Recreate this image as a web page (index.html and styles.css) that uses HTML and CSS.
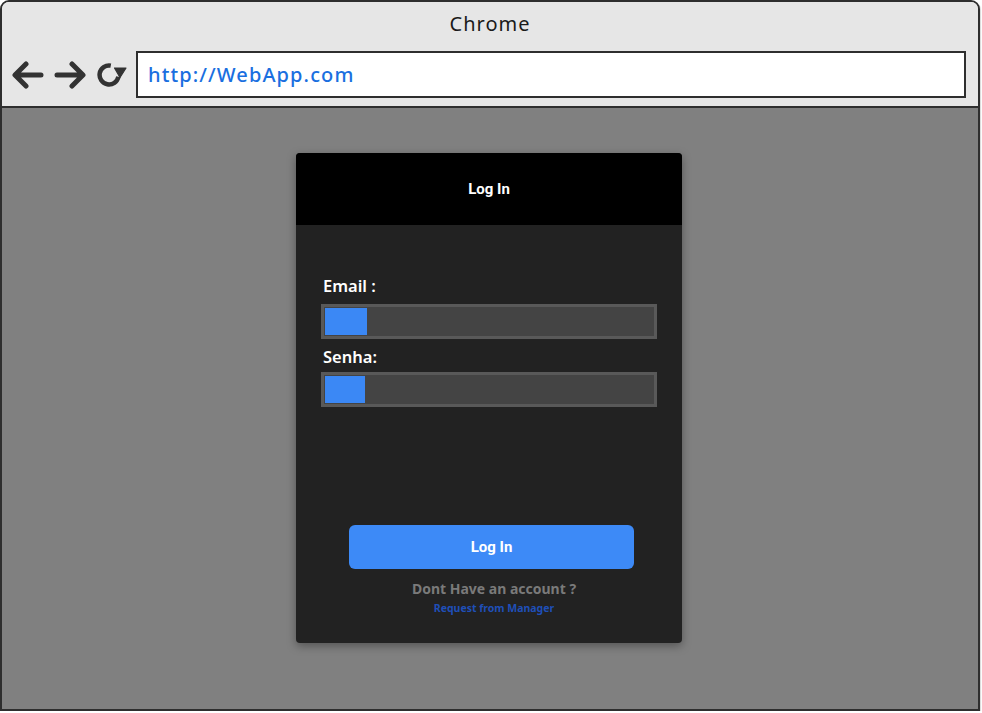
FILE: index.html
```html
<!DOCTYPE html>
<html>
<head>
<meta charset="utf-8">
<link rel="stylesheet" href="styles.css">
</head>
<body>
<div class="window">
  <div class="chrome">
    <div class="title">Chrome</div>
    <div class="toolbar">
      <svg class="icon" width="32" height="28" viewBox="0 0 32 28"><path d="M29 14H4M14 3L3 14L14 25" fill="none" stroke="#333" stroke-width="5" stroke-linecap="round" stroke-linejoin="round"/></svg>
      <svg class="icon" width="32" height="28" viewBox="0 0 32 28"><path d="M3 14H28M18 3L29 14L18 25" fill="none" stroke="#333" stroke-width="5" stroke-linecap="round" stroke-linejoin="round"/></svg>
      <svg class="icon icon-reload" width="32" height="28" viewBox="0 0 32 28"><path d="M13.8 4.6A9.5 9.5 0 1 0 21.4 15.8" fill="none" stroke="#333" stroke-width="4.5" stroke-linecap="butt"/><path d="M17.5 7L29 7L23 16.5Z" fill="#333" stroke="#333" stroke-width="1.2" stroke-linejoin="round"/></svg>
      <div class="url">http://WebApp.com</div>
    </div>
  </div>
  <div class="content">
    <div class="card">
      <div class="card-head">Log In</div>
      <div class="card-body">
        <label class="label">Email :</label>
        <div class="input"><span class="cursor"></span></div>
        <label class="label label-2">Senha:</label>
        <div class="input"><span class="cursor cursor-2"></span></div>
        <div class="spacer"></div>
        <button class="btn">Log In</button>
        <div class="no-account">Dont Have an account ?</div>
        <div class="request">Request from Manager</div>
      </div>
    </div>
  </div>
</div>
</body>
</html>
```

FILE: styles.css
```css
* { box-sizing: border-box; }
html, body { margin: 0; padding: 0; background: #fff; }
body { font-family: "Noto Sans", "Open Sans", sans-serif; }

.window {
  width: 980px;
  height: 711px;
  border: 2px solid #2e2e2e;
  border-radius: 9px 9px 0 0;
  display: flex;
  flex-direction: column;
  overflow: hidden;
  box-shadow: 1px 1px 1px rgba(0,0,0,0.15);
}

.chrome {
  background: #e6e6e6;
  border-bottom: 2px solid #2e2e2e;
  height: 106px;
  display: flex;
  flex-direction: column;
}

.title {
  height: 46px;
  line-height: 44px;
  text-align: center;
  font-size: 20px;
  letter-spacing: 1px;
  color: #1a1a1a;
}

.toolbar {
  display: flex;
  align-items: center;
  padding-left: 10px;
  height: 49px;
  margin-top: 2px;
}

.icon { display: block; margin-right: 10px; }
.icon-reload { margin-right: 7px; margin-left: 1px; }

.url {
  width: 830px;
  height: 47px;
  background: #fff;
  border: 2px solid #2e2e2e;
  font-size: 20px;
  font-weight: 500;
  letter-spacing: 1.1px;
  color: #1a6fe0;
  padding-left: 10px;
  line-height: 43px;
}

.content {
  flex: 1;
  background: #808080;
  display: flex;
  justify-content: center;
  padding-top: 45px;
  padding-right: 2px;
}

.card {
  width: 386px;
  height: 490px;
  background: #222;
  border-radius: 4px;
  overflow: hidden;
  display: flex;
  flex-direction: column;
  box-shadow: 0 3px 10px rgba(0,0,0,0.35);
}

.card-head {
  height: 72px;
  background: #000;
  color: #fff;
  font-family: Roboto, "Noto Sans", sans-serif;
  font-weight: 700;
  font-size: 15px;
  text-align: center;
  line-height: 72px;
}

.card-body {
  flex: 1;
  display: flex;
  flex-direction: column;
  padding: 50px 25px 0 25px;
}

.label {
  color: #fff;
  font-size: 16.5px;
  font-weight: 600;
  line-height: 22px;
  padding-left: 2px;
  margin-bottom: 7px;
}
.label-2 { margin-top: 7px; margin-bottom: 4px; }

.input {
  height: 35px;
  background: #444;
  border: 3px solid #595959;
  padding: 1px;
}
.cursor {
  display: block;
  width: 42px;
  height: 27px;
  background: #3b88f5;
}
.cursor-2 { width: 40px; }

.spacer { flex: 1; }

.btn {
  align-self: center;
  width: 285px;
  height: 44px;
  margin-left: 5px;
  background: #3d8af7;
  border: none;
  border-radius: 6px;
  color: #fff;
  font-family: Roboto, "Noto Sans", sans-serif;
  font-weight: 700;
  font-size: 15px;
  padding: 0;
}

.no-account {
  margin-top: 11px;
  text-align: center;
  padding-left: 10px;
  color: #7a7a7a;
  font-weight: 700;
  font-size: 14px;
  line-height: 18px;
}

.request {
  text-align: center;
  padding-left: 10px;
  color: #1f4fb8;
  font-weight: 700;
  font-size: 10.5px;
  line-height: 14px;
  margin-top: 3px;
  margin-bottom: 28px;
}
```
